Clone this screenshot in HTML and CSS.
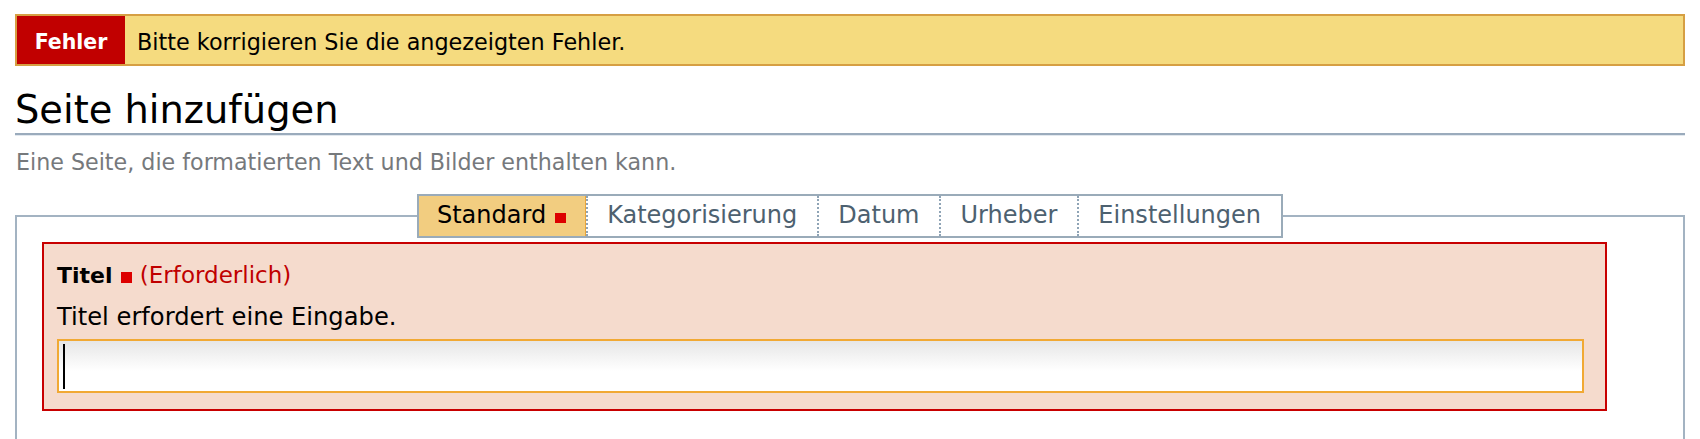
FILE: index.html
```html
<!DOCTYPE html>
<html lang="de">
<head>
<meta charset="utf-8">
<title>Seite hinzufügen</title>
<link rel="stylesheet" href="styles.css">
</head>
<body>
<div class="alert">
  <span class="alert-label">Fehler</span>
  <span class="alert-msg">Bitte korrigieren Sie die angezeigten Fehler.</span>
</div>
<h1 class="title">Seite hinzufügen</h1>
<p class="desc">Eine Seite, die formatierten Text und Bilder enthalten kann.</p>
<form class="edit-form">
  <fieldset class="panel">
    <legend class="panel-legend">
      <span class="tabs">
        <span class="tab tab-active">Standard<span class="req-mark"></span></span>
        <span class="tab">Kategorisierung</span>
        <span class="tab">Datum</span>
        <span class="tab">Urheber</span>
        <span class="tab">Einstellungen</span>
      </span>
    </legend>
    <div class="field field-error">
      <label class="field-label" for="title">Titel <span class="req-mark"></span> <span class="req-text">(Erforderlich)</span></label>
      <div class="field-msg">Titel erfordert eine Eingabe.</div>
      <div class="input-wrap">
        <input id="title" type="text" class="text-input">
        <span class="caret"></span>
      </div>
    </div>
  </fieldset>
</form>
</body>
</html>
```
FILE: styles.css
```css
html, body {
  background: #ffffff;
}
body {
  margin: 14px 15px 0 15px;
  font-family: "DejaVu Sans", "Lucida Grande", Verdana, sans-serif;
  color: #000000;
  overflow: hidden;
}

/* Error bar */
.alert {
  display: flex;
  align-items: stretch;
  height: 52px;
  box-sizing: border-box;
  border: 2px solid #d69f43;
  background: #f5db7f;
}
.alert-label {
  width: 108px;
  flex: none;
  background: #c10000;
  color: #ffffff;
  font-weight: bold;
  font-size: 20.5px;
  line-height: 44px;
  padding-top: 4px;
  text-align: center;
}
.alert-msg {
  padding-left: 12px;
  font-size: 22.3px;
  line-height: 44px;
  padding-top: 4px;
  color: #000000;
}

/* Title */
.title {
  margin: 22px 0 0 0;
  font-weight: normal;
  font-size: 38.4px;
  line-height: 44px;
  padding-bottom: 1px;
  border-bottom: 2px solid #9aabbc;
  box-shadow: 0 1px 0 #e2e8ee;
  color: #000000;
}
.desc {
  margin: 14px 0 0 1px;
  font-size: 22.2px;
  line-height: 26px;
  color: #76797c;
}

/* Fieldset with tabs */
.edit-form {
  margin: 0;
}
.panel {
  margin: 19px 0 0 0;
  padding: 4px 25px 80px 25px;
  border: 2px solid #a3b3c2;
  min-width: 0;
}
.panel-legend {
  margin: 0 auto;
  padding: 0;
}
.tabs {
  display: flex;
  border: 2px solid #9aabb9;
  background: #ffffff;
}
.tab {
  display: block;
  padding: 0 20px 2px 19px;
  font-size: 24px;
  line-height: 38px;
  color: #4d6170;
  border-left: 2px dotted #8fa4b6;
}
.tab:first-child {
  border-left: none;
}
.tab-active {
  background: #f2cd80;
  color: #000000;
  padding: 0 19px 2px 18px;
  border-right: 1px solid #eaa53a;
}
.req-mark {
  display: inline-block;
  width: 11px;
  height: 11px;
  background: #dd0000;
  vertical-align: baseline;
}
.tab-active .req-mark {
  margin-left: 9px;
  height: 10px;
}

/* Field with error */
.field {
  margin-right: 51px;
  border: 2px solid #c80000;
  background: #f5dbcd;
  padding: 17px 21px 16px 13px;
}
.field-label {
  display: block;
  font-weight: bold;
  font-size: 22px;
  line-height: 28px;
  color: #000000;
}
.field-label .req-mark {
  margin-left: 1px;
}
.req-text {
  font-weight: normal;
  font-size: 23px;
  color: #c00000;
}
.field-msg {
  margin-top: 12px;
  font-size: 24.2px;
  line-height: 30px;
  color: #000000;
}
.input-wrap {
  position: relative;
  margin-top: 7px;
}
.text-input {
  display: block;
  width: 100%;
  height: 54px;
  box-sizing: border-box;
  margin: 0;
  padding: 0 4px;
  border: 2px solid #f1a934;
  background: linear-gradient(#e6e6e6 0%, #f7f7f7 40%, #ffffff 60%, #ffffff 100%);
  font-family: inherit;
  font-size: 22px;
  outline: none;
}
.caret {
  position: absolute;
  left: 6px;
  top: 5px;
  width: 2px;
  height: 45px;
  background: #000000;
}
```
